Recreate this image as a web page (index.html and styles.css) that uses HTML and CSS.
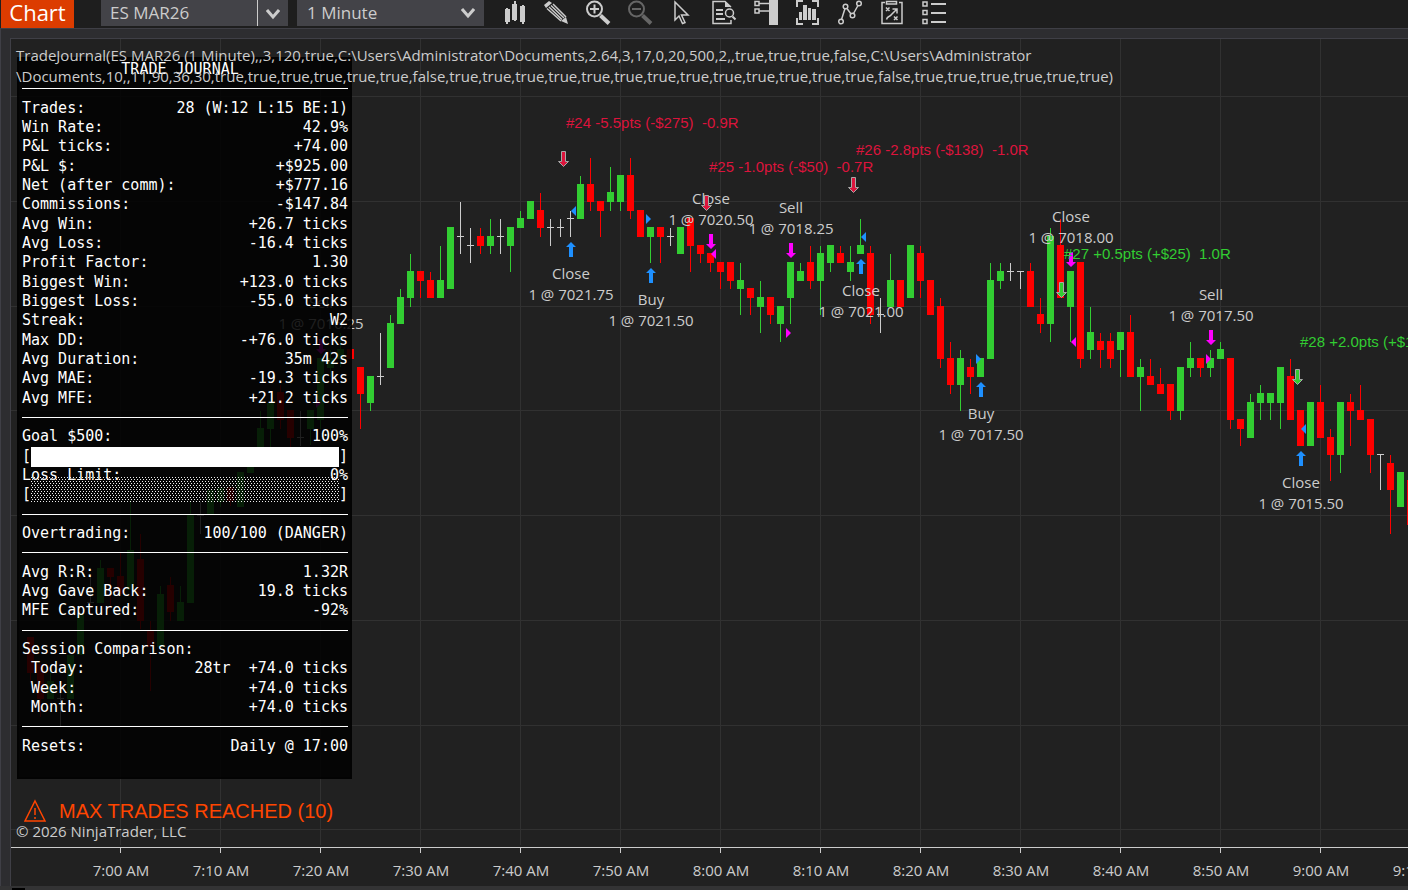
FILE: index.html
```html
<!DOCTYPE html>
<html lang="en">
<head>
    <meta charset="UTF-8">
    <meta name="viewport" content="width=device-width, initial-scale=1.0">
    <title>Chart - ES MAR26</title>
    <link rel="stylesheet" href="styles.css">
</head>
<body>

    <header class="toolbar">
        <button class="chart-tab">Chart</button>
        <div class="instrument">
            <input type="text" value="ES MAR26" aria-label="Instrument">
            <button aria-label="Choose instrument">
                <svg width="14" height="12" viewBox="0 0 14 12"><path d="M1 2l6 7 6-7" /></svg>
            </button>
        </div>
        <div class="interval">
            <select aria-label="Interval">
                <option>1 Minute</option>
                <option>5 Minute</option>
            </select>
            <svg width="14" height="12" viewBox="0 0 14 12"><path d="M1 2l6 7 6-7" /></svg>
        </div>
        <nav class="tools">
            <button aria-label="Bar style">
                <svg viewBox="0 0 26 26"><path class="fill" d="M3 9h5v13H3zM10 4h5v16h-5zM18 6h5v16h-5zM4 8h2v16H4zM12 1h2v20h-2zM20 5h2v19h-2z" /></svg>
            </button>
            <button aria-label="Drawing tools">
                <svg viewBox="0 0 26 26"><path class="fill" d="M0 5l5-4 3 2-6 5zM24 24l-7-3 5-4z" /><path class="thin" d="M3 8.500L17 21M9 4l13 13M5 7l13 12.500M7 5.500L20 18" /></svg>
            </button>
            <button aria-label="Zoom in">
                <svg viewBox="0 0 26 26"><circle cx="8.500" cy="9" r="7.500" /><path d="M4 9h9M8.500 4.500v9" /><path class="handle" d="M14.500 15.500l8.500 8" /></svg>
            </button>
            <button aria-label="Zoom out" disabled>
                <svg viewBox="0 0 26 26"><circle cx="8.500" cy="9" r="7.500" /><path d="M4 9h9" /><path class="handle" d="M14.500 15.500l8.500 8" /></svg>
            </button>
            <button aria-label="Cursor">
                <svg viewBox="0 0 26 26"><path class="thin" d="M5 2v18l4-4 3.500 7.500 2.500-1-3.500-7.500H18z" /></svg>
            </button>
            <button aria-label="Data box">
                <svg viewBox="0 0 26 26"><path class="thin" d="M19 7L13 1.500H1v22h18V20" /><path class="fill" d="M13 1l6 6h-6z" /><path d="M4 10h7M4 14h7M4 19h9M20.500 16.500l3 3" /><circle class="thin" cx="17.500" cy="13" r="4" /></svg>
            </button>
            <button aria-label="Chart trader">
                <svg viewBox="0 0 26 26"><path class="fill" d="M15 0h9v25h-9z" /><path class="thin" d="M1 1.500h4v4H1zM1 9h4v4H1zM5 3.500h10M5 11h10" /></svg>
            </button>
            <button aria-label="Data series">
                <svg viewBox="0 0 26 26"><path class="fill" d="M3 12h3v8H3zM7 5h4v15H7zM12 8h3v12h-3zM16 9h4v11h-4z" /><path d="M1 7V1h6M16 1h6v6M22 18v6h-6M7 24H1v-6" /></svg>
            </button>
            <button aria-label="Indicators">
                <svg viewBox="0 0 26 26"><path class="thin" d="M3.500 19.500L7 8.500M9 8.500l4 5.500M15.500 13.500l4.500-8" /><circle class="thin" cx="3" cy="21.500" r="2.300" /><circle class="thin" cx="7.500" cy="6.500" r="2.300" /><circle class="thin" cx="14.500" cy="15.500" r="2.300" /><circle class="thin" cx="21" cy="3.500" r="2.300" /></svg>
            </button>
            <button aria-label="Strategies">
                <svg viewBox="0 0 26 26"><path class="thin" d="M5 2.500H2v21h20v-21h-3M6.500 1.500h10v2.500h-10z" /><path class="thin" d="M6 7.500l3.500 3.500M9.500 7.500L6 11M14 16.500l3.500 3.500M17.500 16.500L14 20M6.500 19.500c1-4 3-2 5-5l5-5M12.500 9h4.500v4.500" /></svg>
            </button>
            <button aria-label="Properties">
                <svg viewBox="0 0 26 26"><path class="thin" d="M1 2h4v4H1zM1 10.500h4v4H1zM1 19.500h4v4H1z" /><path d="M9 4h15M9 13h15M9 22h15" /></svg>
            </button>
        </nav>
    </header>

    <main class="workspace">
        <section class="chart">
            <svg id="plot" class="plot"></svg>

            <div class="journal">
                <div class="row title">TRADE JOURNAL</div>
                <hr>
                <div class="row"><span>Trades:</span><span>28 (W:12 L:15 BE:1)</span></div>
                <div class="row"><span>Win Rate:</span><span>42.9%</span></div>
                <div class="row"><span>P&amp;L ticks:</span><span>+74.00</span></div>
                <div class="row"><span>P&amp;L $:</span><span>+$925.00</span></div>
                <div class="row"><span>Net (after comm):</span><span>+$777.16</span></div>
                <div class="row"><span>Commissions:</span><span>-$147.84</span></div>
                <div class="row"><span>Avg Win:</span><span>+26.7 ticks</span></div>
                <div class="row"><span>Avg Loss:</span><span>-16.4 ticks</span></div>
                <div class="row"><span>Profit Factor:</span><span>1.30</span></div>
                <div class="row"><span>Biggest Win:</span><span>+123.0 ticks</span></div>
                <div class="row"><span>Biggest Loss:</span><span>-55.0 ticks</span></div>
                <div class="row"><span>Streak:</span><span>W2</span></div>
                <div class="row"><span>Max DD:</span><span>-+76.0 ticks</span></div>
                <div class="row"><span>Avg Duration:</span><span>35m 42s</span></div>
                <div class="row"><span>Avg MAE:</span><span>-19.3 ticks</span></div>
                <div class="row"><span>Avg MFE:</span><span>+21.2 ticks</span></div>
                <hr>
                <div class="row"><span>Goal $500:</span><span>100%</span></div>
                <div class="row meter"><span>[</span><div class="full"></div><span>]</span></div>
                <div class="row"><span>Loss Limit:</span><span>0%</span></div>
                <div class="row meter"><span>[</span><div class="empty"></div><span>]</span></div>
                <hr>
                <div class="row"><span>Overtrading:</span><span>100/100 (DANGER)</span></div>
                <hr>
                <div class="row"><span>Avg R:R:</span><span>1.32R</span></div>
                <div class="row"><span>Avg Gave Back:</span><span>19.8 ticks</span></div>
                <div class="row"><span>MFE Captured:</span><span>-92%</span></div>
                <hr>
                <div class="row"><span>Session Comparison:</span></div>
                <div class="row"><span> Today:</span><span>28tr  +74.0 ticks</span></div>
                <div class="row"><span> Week:</span><span>+74.0 ticks</span></div>
                <div class="row"><span> Month:</span><span>+74.0 ticks</span></div>
                <hr>
                <div class="row"><span>Resets:</span><span>Daily @ 17:00</span></div>
            </div>

            <p class="indicator-name">TradeJournal(ES MAR26 (1 Minute),,3,120,true,C:\Users\Administrator\Documents,2.64,3,17,0,20,500,2,,true,true,true,false,C:\Users\Administrator<br>\Documents,10,,11,90,36,30,true,true,true,true,true,true,false,true,true,true,true,true,true,true,true,true,true,true,true,true,false,true,true,true,true,true,true)</p>

            <div class="notices">
                <p class="warning">
                    <svg width="24" height="24" viewBox="0 0 24 24"><path d="M12 2L22 22H2zM12 9v7M12 18v2" /></svg>
                    MAX TRADES REACHED (10)
                </p>
                <p class="copyright">© 2026 NinjaTrader, LLC</p>
            </div>
        </section>
    </main>
    <footer class="scrollbar"><div class="thumb"></div></footer>

    <script src="chart.js"></script>
</body>
</html>
```
FILE: styles.css
```css
* {
    box-sizing: border-box;
}

body {
    margin: 0;
    height: 100vh;
    display: flex;
    flex-direction: column;
    overflow: hidden;
    background: #2d2d30;
    color: #cccccc;
    font-family: "Open Sans", "Noto Sans", sans-serif;
    font-size: 15px;
}

p {
    margin: 0;
}

button,
input,
select {
    border: none;
    border-radius: 0;
    margin: 0;
    padding: 0;
    font: inherit;
    color: inherit;
    background: none;
}

/* toolbar */
.toolbar {
    display: flex;
    align-items: flex-start;
    height: 28px;
    padding-left: 1px;
    background: #1e1e1e;
}

.chart-tab {
    width: 73px;
    height: 28px;
    padding-bottom: 4px;
    margin-right: 27px;
    background: #dc3c00;
    color: white;
    font-size: 22px;
    line-height: 24px;
}

.instrument,
.interval {
    display: flex;
    width: 187px;
    height: 26px;
    margin-right: 9px;
    background: #434348;
    font-size: 17px;
}

.instrument input {
    flex: 1;
    min-width: 0;
    padding: 0 9px 2px;
}

.instrument button {
    width: 31px;
    border-left: 1px solid #cccccc;
}

.interval {
    position: relative;
}

.interval select {
    flex: 1;
    appearance: none;
    padding: 0 10px 2px;
}

.interval svg {
    position: absolute;
    right: 9px;
    top: 7px;
    pointer-events: none;
}

.instrument path,
.interval path {
    fill: none;
    stroke: #cccccc;
    stroke-width: 3;
}

.tools {
    display: flex;
    margin-left: 1px;
}

.tools button {
    width: 42px;
    height: 26px;
}

.tools svg {
    display: block;
    width: 26px;
    height: 26px;
    margin: 0 auto;
    fill: none;
    stroke: #cccccc;
    stroke-width: 2;
}

.tools .fill {
    fill: #cccccc;
    stroke: none;
}

.tools .thin {
    stroke-width: 1.5;
}

.tools .handle {
    stroke-width: 4;
}

.tools button:disabled svg {
    stroke: #666666;
}

/* chart */
.workspace {
    flex: 1;
    display: flex;
    min-height: 0;
    padding: 9px 0 0 9px;
    border-top: 1px solid #3f3f46;
    border-left: 1px solid #3f3f46;
}

.chart {
    position: relative;
    flex: 1;
    border-top: 1px solid #3f3f46;
    border-left: 1px solid #3f3f46;
    background: #212121;
    overflow: hidden;
}

.plot {
    display: block;
    width: 100%;
    height: 100%;
}

.grid {
    stroke: #313131;
}

.axis {
    stroke: #cccccc;
}

.up {
    fill: #32cd32;
}

.down {
    fill: #ff0000;
}

.flat {
    fill: #cccccc;
}

.buy {
    fill: #1e90ff;
}

.sell {
    fill: #ff00ff;
}

.label {
    fill: #cccccc;
    font-size: 15px;
    text-anchor: middle;
}

.result {
    font-family: "Liberation Sans", Arial, sans-serif;
    font-size: 15px;
    white-space: pre;
}

.win {
    fill: #32cd32;
}

.loss {
    fill: #dc143c;
}

.exit {
    stroke: #a9a9a9;
    stroke-width: 1;
}

.indicator-name {
    position: absolute;
    left: 5px;
    top: 6px;
    line-height: 21px;
    white-space: nowrap;
}

/* trade journal panel */
.journal {
    position: absolute;
    left: 6px;
    top: 18px;
    width: 335px;
    min-height: 722px;
    padding: 1px 2px 21px 3px;
    display: grid;
    grid-auto-rows: 1fr;
    align-items: center;
    border: 2px solid rgba(0, 0, 0, 0.9);
    background: rgba(0, 0, 0, 0.85);
    background-clip: padding-box;
    color: white;
    font-family: "DejaVu Sans Mono", Consolas, monospace;
    font-size: 15px;
    line-height: 19px;
    white-space: pre;
}

.row {
    display: flex;
    justify-content: space-between;
    height: 19px;
}

.title {
    padding-left: 11ch;
}

.journal hr {
    width: 100%;
    margin: 0;
    border: none;
    border-top: 1px solid white;
}

.meter div {
    flex: 1;
}

.full {
    height: 20px;
    background: white;
}

.empty {
    height: 25px;
    margin-top: -8px;
    background-image: conic-gradient(at 1px 1px, transparent 75%, #eeeeee 0), conic-gradient(at 1px 1px, transparent 75%, #eeeeee 0);
    background-size: 3px 4px;
    background-position: 0 0, 1px 2px;
}

/* notices at the bottom of the plot */
.notices {
    position: absolute;
    left: 5px;
    bottom: 47px;
}

.warning {
    display: flex;
    align-items: center;
    gap: 12px;
    padding-left: 7px;
    color: #ff4500;
    font-family: "Liberation Sans", Arial, sans-serif;
    font-size: 20px;
    line-height: 22px;
}

.warning svg {
    fill: none;
    stroke: #ff4500;
    stroke-width: 1.5;
}

.copyright {
    line-height: 16px;
}

.scrollbar {
    height: 4px;
    padding: 2px 0 0 12px;
    background: #333334;
}

.thumb {
    width: 13px;
    height: 2px;
    background: black;
}
```
FILE: chart.js
```js
// [x, kind, high, low, body top, body bottom], u = up, d = down, f = flat
const candles = [
    [30, "d", 637, 683, 637, 673], [40, "d", 664, 717, 664, 699], [50, "u", 665, 699, 681, 699],
    [60, "f", 681, 726, 698, 699], [70, "u", 655, 699, 655, 699], [80, "u", 613, 655, 613, 655],
    [90, "f", 576, 603, 602, 603], [100, "u", 560, 603, 568, 603], [110, "d", 568, 606, 568, 577],
    [120, "d", 552, 594, 576, 594], [130, "u", 500, 590, 550, 590], [140, "d", 534, 629, 559, 621],
    [150, "d", 621, 691, 630, 647], [160, "u", 586, 647, 594, 647], [170, "d", 577, 621, 585, 612],
    [180, "u", 586, 621, 602, 621], [190, "u", 502, 603, 515, 603], [200, "f", 502, 534, 515, 516],
    [210, "u", 490, 515, 490, 515], [220, "u", 488, 507, 488, 502], [230, "d", 487, 506, 487, 501],
    [240, "u", 472, 507, 472, 507], [250, "u", 465, 473, 465, 473], [260, "u", 411, 447, 428, 447],
    [270, "u", 403, 447, 403, 429], [280, "d", 385, 429, 392, 420], [290, "d", 410, 447, 410, 438],
    [300, "f", 411, 446, 437, 438], [310, "u", 410, 445, 410, 429], [320, "u", 358, 429, 358, 420],
    [330, "u", 350, 377, 358, 368], [340, "u", 333, 367, 349, 359], [350, "d", 349, 359, 349, 359],
    [360, "d", 367, 429, 367, 394], [370, "u", 376, 411, 376, 403], [380, "f", 333, 385, 376, 377],
    [390, "u", 315, 368, 323, 368], [400, "u", 289, 324, 297, 324], [410, "u", 254, 307, 271, 298],
    [420, "d", 271, 298, 271, 281], [430, "d", 272, 298, 280, 298], [440, "u", 246, 298, 280, 298],
    [450, "u", 227, 289, 227, 289], [460, "f", 202, 254, 236, 237], [470, "f", 228, 263, 245, 246],
    [480, "d", 228, 254, 236, 246], [490, "u", 219, 254, 236, 246], [500, "f", 219, 254, 236, 237],
    [510, "u", 227, 272, 227, 246], [520, "u", 211, 228, 218, 228], [530, "u", 201, 219, 201, 219],
    [540, "d", 193, 237, 210, 228], [550, "f", 219, 246, 227, 228], [560, "f", 219, 237, 227, 228],
    [570, "f", 211, 237, 218, 219], [580, "u", 176, 219, 184, 219], [590, "d", 158, 211, 184, 202],
    [600, "d", 201, 237, 201, 211], [610, "u", 167, 211, 192, 202], [620, "u", 175, 211, 175, 202],
    [630, "d", 158, 219, 175, 211], [640, "d", 210, 237, 210, 237], [650, "u", 227, 263, 227, 237],
    [660, "d", 227, 263, 227, 237], [670, "f", 228, 246, 236, 237], [680, "u", 227, 254, 227, 254],
    [690, "d", 218, 272, 218, 246], [700, "d", 245, 263, 245, 254], [710, "d", 253, 272, 253, 263],
    [720, "d", 262, 289, 262, 272], [730, "d", 262, 289, 262, 281], [740, "u", 263, 315, 280, 289],
    [750, "d", 288, 315, 288, 298], [760, "u", 281, 333, 297, 307], [770, "d", 297, 324, 297, 315],
    [780, "u", 306, 342, 306, 324], [790, "u", 262, 324, 262, 298], [800, "u", 263, 281, 271, 281],
    [810, "d", 246, 289, 262, 281], [820, "u", 246, 315, 253, 281], [830, "u", 245, 272, 245, 263],
    [840, "d", 246, 263, 253, 263], [850, "u", 246, 281, 262, 272], [860, "u", 219, 254, 245, 254],
    [870, "d", 246, 324, 253, 315], [880, "f", 298, 333, 314, 315], [890, "u", 254, 307, 280, 307],
    [900, "d", 280, 307, 280, 307], [910, "u", 245, 298, 245, 298], [920, "d", 246, 298, 253, 281],
    [930, "d", 280, 315, 280, 315], [940, "d", 298, 368, 306, 359], [950, "d", 342, 394, 358, 385],
    [960, "u", 350, 411, 358, 385], [970, "d", 359, 394, 367, 377], [980, "u", 358, 377, 358, 377],
    [990, "u", 263, 359, 280, 359], [1000, "u", 263, 289, 271, 281], [1010, "f", 263, 281, 271, 272],
    [1020, "f", 271, 289, 271, 272], [1030, "d", 263, 307, 271, 307], [1040, "d", 298, 333, 314, 324],
    [1050, "u", 228, 342, 236, 324], [1060, "d", 219, 298, 245, 298], [1070, "u", 271, 342, 271, 307],
    [1080, "d", 262, 368, 262, 359], [1090, "u", 307, 359, 332, 350], [1100, "d", 333, 368, 341, 350],
    [1110, "d", 333, 368, 341, 359], [1120, "u", 332, 377, 332, 350], [1130, "d", 315, 377, 332, 377],
    [1140, "u", 359, 411, 367, 377], [1150, "d", 359, 385, 376, 385], [1160, "d", 368, 394, 384, 394],
    [1170, "d", 384, 420, 384, 411], [1180, "u", 367, 420, 367, 411], [1190, "u", 342, 377, 358, 368],
    [1200, "d", 358, 377, 358, 368], [1210, "u", 350, 377, 358, 368], [1220, "u", 342, 359, 349, 359],
    [1230, "d", 358, 429, 358, 420], [1240, "d", 419, 446, 419, 429], [1250, "u", 394, 438, 402, 438],
    [1260, "u", 385, 420, 393, 403], [1270, "u", 393, 420, 393, 403], [1280, "u", 367, 429, 367, 403],
    [1290, "d", 359, 420, 376, 420], [1300, "d", 410, 446, 410, 446], [1310, "u", 402, 446, 402, 446],
    [1320, "d", 385, 438, 402, 438], [1330, "d", 429, 481, 437, 455], [1340, "u", 402, 473, 402, 455],
    [1350, "d", 394, 446, 402, 411], [1360, "d", 385, 420, 410, 420], [1370, "d", 419, 473, 419, 455],
    [1380, "f", 454, 490, 454, 455], [1390, "d", 455, 534, 463, 490], [1400, "u", 472, 507, 472, 507],
    [1410, "d", 480, 525, 480, 525]
];

// x, top of arrow, side, name, price, y of the first text line
const orders = [
    [321, 339, "sell", "Sell", "7016.25", 308],
    [571, 242, "buy", "Close", "7021.75", 279],
    [651, 268, "buy", "Buy", "7021.50", 305],
    [711, 234, "sell", "Close", "7020.50", 204],
    [791, 243, "sell", "Sell", "7018.25", 213],
    [861, 259, "buy", "Close", "7021.00", 296],
    [981, 382, "buy", "Buy", "7017.50", 419],
    [1071, 252, "sell", "Close", "7018.00", 222],
    [1211, 330, "sell", "Sell", "7017.50", 300],
    [1301, 451, "buy", "Close", "7015.50", 488]
];

// fill markers: x of the tip, y, side, direction
const fills = [
    [321, 403, "sell", 1], [571, 211, "buy", -1], [651, 219, "buy", 1], [711, 254, "sell", -1],
    [791, 333, "sell", 1], [861, 237, "buy", -1], [981, 359, "buy", 1],
    [1071, 342, "sell", -1], [1211, 359, "sell", 1], [1301, 429, "buy", -1]
];

// arrow x, arrow top, text x, baseline, result, text
const results = [
    [563, 151, 566, 128, "loss", "#24 -5.5pts (-$275)  -0.9R"],
    [706, 195, 709, 172, "loss", "#25 -1.0pts (-$50)  -0.7R"],
    [853, 177, 856, 155, "loss", "#26 -2.8pts (-$138)  -1.0R"],
    [1061, 282, 1064, 259, "win", "#27 +0.5pts (+$25)  1.0R"],
    [1297, 369, 1300, 347, "win", "#28 +2.0pts (+$100)  1.0R"]
];

const LEFT = 11;
const TOP = 39;
const AXIS_Y = 847;
const colors = { u: "up", d: "down", f: "flat" };

function rect(x, y, w, h, cls) {
    return `<rect x="${x}" y="${y}" width="${w}" height="${h}" class="${cls}"/>`;
}

function drawGrid(right) {
    let out = "";
    for (let x = 120; x < right + 50; x += 100) {
        const minutes = 420 + (x - 120) / 10;
        const time = Math.floor(minutes / 60) + ":" + String(minutes % 60).padStart(2, "0") + " AM";
        out += `<path class="grid" d="M${x + 0.5} ${TOP}V845"/>`;
        out += `<path class="axis" d="M${x + 0.5} ${AXIS_Y}v6"/>`;
        out += `<text class="label" x="${x + 1}" y="876">${time}</text>`;
    }
    for (const y of [96, 201, 306, 410, 515, 620, 725, 829]) {
        out += `<path class="grid" d="M${LEFT} ${y + 0.5}H${right}"/>`;
    }
    out += `<path class="axis" d="M${LEFT} ${AXIS_Y + 0.5}H${right}"/>`;
    return out;
}

function drawCandles() {
    return candles.map(([x, kind, high, low, top, bottom]) =>
        rect(x, high, 1, low - high, colors[kind]) + rect(x - 3, top, 7, bottom - top, colors[kind])
    ).join("");
}

function drawOrders() {
    return orders.map(([x, y, side, name, price, textY]) => {
        const shape = side === "buy"
            ? `M${x} ${y}l5 5h-3v10h-4v-10h-3z`
            : `M${x} ${y + 15}l5-5h-3v-10h-4v10h-3z`;
        return `<path class="${side}" d="${shape}"/>` +
            `<text class="label" x="${x}" y="${textY}">${name}</text>` +
            `<text class="label" x="${x}" y="${textY + 21}">1 @ ${price}</text>`;
    }).join("");
}

function drawFills() {
    return fills.map(([x, y, side, dir]) =>
        `<path class="${side}" d="M${x} ${y}l${-5 * dir}-5v10z"/>`
    ).join("");
}

function drawResults() {
    return results.map(([x, y, textX, textY, result, text]) =>
        `<path class="exit ${result}" d="M${x + 0.5} ${y + 15.5}l-5-5h3v-10h4v10h3z"/>` +
        `<text class="result ${result}" x="${textX}" y="${textY}">${text}</text>`
    ).join("");
}

function draw() {
    const plot = document.getElementById("plot");
    const right = LEFT + plot.clientWidth;
    plot.innerHTML = `<g transform="translate(${-LEFT} ${-TOP})">` +
        drawGrid(right) + drawCandles() + drawFills() + drawOrders() + drawResults() + "</g>";
}

window.addEventListener("resize", draw);
draw();
```
